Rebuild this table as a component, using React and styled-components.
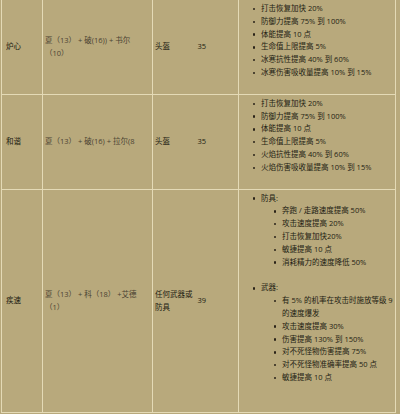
import styled, { createGlobalStyle } from "styled-components";

const GlobalStyle = createGlobalStyle`
  html, body {
    margin: 0;
    background: #b8a97c;
  }
  body {
    font-family: "Open Sans", "Noto Sans CJK SC", sans-serif;
  }
`;

const Table = styled.table`
  border-collapse: collapse;
  table-layout: fixed;
  width: 395px;
  margin: -1px 0 0 1px;
  font-size: 7.5px;
  line-height: 12.8px;
`;

const Cell = styled.td`
  border: 1px solid #e4dab6;
  padding: 2px 2px 2px ${(p) => p.$padLeft ?? 2}px;
  vertical-align: ${(p) => (p.$top ? "top" : "middle")};
  color: ${(p) => (p.$muted ? "#4b4333" : "#211b11")};
  ${(p) => p.$joinRight && "border-right-style: hidden;"}
`;

const List = styled.ul`
  list-style: none;
  margin: 0 0 ${(p) => (p.$nested ? 13 : 0)}px;
  padding: 0 0 ${(p) => (p.$nested ? 0 : 13)}px ${(p) => (p.$nested ? 21 : 20)}px;
`;

const Item = styled.li`
  color: #231d13;

  &::before {
    content: "";
    display: inline-block;
    width: 2.5px;
    height: 2.5px;
    border-radius: 50%;
    background: #2a2318;
    margin: 0 6px 0 -8.5px;
    vertical-align: middle;
  }
`;

const rows = [
  {
    name: "炉心",
    recipe: ["夏（13） + 破(16)) + 书尔", "（10）"],
    slot: "头盔",
    level: "35",
    mods: [
      "打击恢复加快 20%",
      "防御力提高 75% 到 100%",
      "体能提高 10 点",
      "生命值上限提高 5%",
      "冰寒抗性提高 40% 到 60%",
      "冰寒伤害吸收量提高 10% 到 15%",
    ],
  },
  {
    name: "和谐",
    recipe: ["夏（13） + 破(16) + 拉尔(8"],
    slot: "头盔",
    level: "35",
    mods: [
      "打击恢复加快 20%",
      "防御力提高 75% 到 100%",
      "体能提高 10 点",
      "生命值上限提高 5%",
      "火焰抗性提高 40% 到 60%",
      "火焰伤害吸收量提高 10% 到 15%",
    ],
  },
];

const armor = [
  "奔跑 / 走路速度提高 50%",
  "攻击速度提高 20%",
  "打击恢复加快20%",
  "敏捷提高 10 点",
  "消耗精力的速度降低 50%",
];

const weapon = [
  "攻击速度提高 30%",
  "伤害提高 130% 到 150%",
  "对不死怪物伤害提高 75%",
  "对不死怪物准确率提高 50 点",
  "敏捷提高 10 点",
];

function App() {
  return (
    <>
      <GlobalStyle />
      <Table>
        <colgroup>
          <col style={{ width: 41 }} />
          <col style={{ width: 110 }} />
          <col style={{ width: 43 }} />
          <col style={{ width: 43 }} />
          <col />
        </colgroup>
        <tbody>
          {rows.map((r) => (
            <tr key={r.name}>
              <Cell $padLeft={4}>{r.name}</Cell>
              <Cell $muted>
                {r.recipe.map((line, i) => (
                  <span key={line}>
                    {i > 0 && <br />}
                    {line}
                  </span>
                ))}
              </Cell>
              <Cell $joinRight>{r.slot}</Cell>
              <Cell>{r.level}</Cell>
              <Cell $top>
                <List>
                  {r.mods.map((m) => (
                    <Item key={m}>{m}</Item>
                  ))}
                </List>
              </Cell>
            </tr>
          ))}
          <tr>
            <Cell $padLeft={4}>疾速</Cell>
            <Cell $muted>
              夏（13） + 科（18） +艾德
              <br />
              （1）
            </Cell>
            <Cell $joinRight>任何武器或防具</Cell>
            <Cell>39</Cell>
            <Cell $top>
              <List>
                <Item>
                  防具:
                  <List $nested>
                    {armor.map((m) => (
                      <Item key={m}>{m}</Item>
                    ))}
                  </List>
                </Item>
                <Item>
                  武器:
                  <List $nested>
                    <Item>
                      有 5% 的机率在攻击时施放等级 9<br />的速度爆发
                    </Item>
                    {weapon.map((m) => (
                      <Item key={m}>{m}</Item>
                    ))}
                  </List>
                </Item>
              </List>
            </Cell>
          </tr>
        </tbody>
      </Table>
    </>
  );
}

export default App;
